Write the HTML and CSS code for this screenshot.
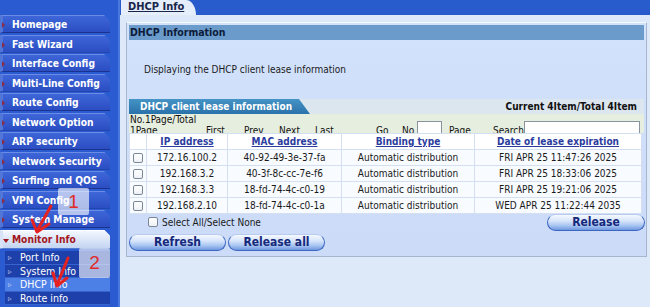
FILE: index.html
```html
<!DOCTYPE html>
<html lang="en">
<head>
  <meta charset="UTF-8">
  <title>DHCP Info</title>
  <link rel="stylesheet" href="styles.css">
</head>
<body>

<div class="page">
  <nav class="sidebar">
    <ul class="menu">
      <li>Homepage</li>
      <li>Fast Wizard</li>
      <li>Interface Config</li>
      <li>Multi-Line Config</li>
      <li>Route Config</li>
      <li>Network Option</li>
      <li>ARP security</li>
      <li>Network Security</li>
      <li>Surfing and QOS</li>
      <li>VPN Config</li>
      <li>System Manage</li>
      <li class="open">Monitor Info</li>
    </ul>
    <ul class="submenu">
      <li>Port Info</li>
      <li>System Info</li>
      <li class="on">DHCP Info</li>
      <li>Route info</li>
    </ul>
  </nav>

  <main class="main">
    <div class="tabbar"><span class="tab">DHCP Info</span></div>

    <section class="panel">
      <h3 class="panel-head">DHCP Information</h3>
      <p class="intro">Displaying the DHCP client lease information</p>

      <div class="subhead">
        <span class="subtab">DHCP client lease information</span>
        <span class="count">Current 4Item/Total 4Item</span>
      </div>

      <!-- pager row is cut off by the table, like on the device -->
      <div class="pager">
        <span class="pg-first">No.1Page/Total 1Page</span>
        <span class="pg w-first">First</span>
        <span class="pg w-prev">Prev</span>
        <span class="pg w-next">Next</span>
        <span class="pg w-last">Last</span>
        <span class="pg w-go">Go</span>
        <span class="pg w-no">No</span>
        <span class="pg-input w-page"><input type="text" class="page-no"></span>
        <span class="pg w-pg">Page</span>
        <span class="pg w-search">Search</span>
        <span class="pg-input"><input type="text" class="search"></span>
      </div>

      <table class="leases">
        <thead>
          <tr>
            <th class="c-chk"></th>
            <th class="c-ip">IP address</th>
            <th class="c-mac">MAC address</th>
            <th class="c-type">Binding type</th>
            <th>Date of lease expiration</th>
          </tr>
        </thead>
        <tbody>
          <tr>
            <td><input type="checkbox" class="chk"></td>
            <td>172.16.100.2</td>
            <td>40-92-49-3e-37-fa</td>
            <td>Automatic distribution</td>
            <td>FRI APR 25 11:47:26 2025</td>
          </tr>
          <tr>
            <td><input type="checkbox" class="chk"></td>
            <td>192.168.3.2</td>
            <td>40-3f-8c-cc-7e-f6</td>
            <td>Automatic distribution</td>
            <td>FRI APR 25 18:33:06 2025</td>
          </tr>
          <tr>
            <td><input type="checkbox" class="chk"></td>
            <td>192.168.3.3</td>
            <td>18-fd-74-4c-c0-19</td>
            <td>Automatic distribution</td>
            <td>FRI APR 25 19:21:06 2025</td>
          </tr>
          <tr>
            <td><input type="checkbox" class="chk"></td>
            <td>192.168.2.10</td>
            <td>18-fd-74-4c-c0-1a</td>
            <td>Automatic distribution</td>
            <td>WED APR 25 11:22:44 2035</td>
          </tr>
        </tbody>
      </table>

      <div class="select-row">
        <label class="select-all"><input type="checkbox" class="chk"> Select All/Select None</label>
        <button class="btn btn-release">Release</button>
      </div>

      <div class="btn-row">
        <button class="btn">Refresh</button>
        <button class="btn">Release all</button>
      </div>
    </section>
  </main>

  <!-- screenshot annotations -->
  <div class="mark mark-1">1</div>
  <div class="mark mark-2">2</div>
  <svg class="arrows" width="120" height="307" viewBox="0 0 120 307">
    <path d="M51 206 L37 231" />
    <path d="M32 220 L37 232 L49 224" />
    <path d="M68 258 L57 285" />
    <path d="M53 273 L57 286 L67 278" />
  </svg>
</div>

</body>
</html>
```

FILE: styles.css
```css
* {
  box-sizing: border-box;
}
body {
  margin: 0;
  width: 650px;
  height: 307px;
  overflow: hidden;
  font-family: "DejaVu Sans Condensed", "DejaVu Sans", sans-serif;
  font-size: 10px;
  color: #111;
}
.page {
  position: relative;
  display: flex;
  height: 307px;
}

/* left menu */
.sidebar {
  width: 120px;
  flex: none;
  background: #2b5bd0;
  border-right: 2px solid #4a78dc;
  padding-top: 15px;
}
.menu, .submenu {
  list-style: none;
  margin: 0;
  padding: 0;
}
.menu li {
  position: relative;
  width: 110px;
  height: 18px;
  margin-bottom: 1.5px;
  padding-left: 9px;
  line-height: 17px;
  font-size: 10.2px;
  font-weight: bold;
  color: #fff;
  background: linear-gradient(#3e66d8, #2b4ec2);
  border-top: 1px solid #6a8ce4;
  border-bottom: 1px solid #1b338f;
  border-left: 3px solid #5275d8;
  clip-path: polygon(0 0, 104px 0, 110px 6px, 110px 100%, 0 100%);
  white-space: nowrap;
}
.menu li::before {
  content: "";
  position: absolute;
  left: -1px;
  top: 6px;
  border-left: 3px solid #8a2c44;
  border-top: 3px solid transparent;
  border-bottom: 3px solid transparent;
}
.menu li.open {
  height: 19px;
  line-height: 18px;
  color: #a3161c;
  background: linear-gradient(#f3f7fe, #c4d5f2);
  border-top-color: #ffffff;
  border-bottom-color: #7f97cc;
  border-left-color: #d8e3f8;
}
.menu li.open::before {
  left: 0;
  top: 8px;
  border-left: 3px solid transparent;
  border-right: 3px solid transparent;
  border-top: 4px solid #a3161c;
  border-bottom: 0;
}
.submenu {
  margin-top: 2.5px;
}
.submenu li {
  position: relative;
  margin-left: 5px;
  width: 105px;
  height: 13.5px;
  padding-left: 15px;
  line-height: 13px;
  font-size: 10.5px;
  color: #fff;
  background: #1e40aa;
  border-bottom: 1px solid #3862cc;
}
.submenu li::before {
  content: "▹";
  position: absolute;
  left: 3px;
  top: 0;
  font-size: 8px;
  color: #c8d6f6;
}
.submenu li.on {
  background: #4d80e6;
}

/* right side */
.main {
  flex: 1;
  background: #dde8f8;
}
.tabbar {
  height: 15px;
  background: #285ccc;
  padding-left: 1px;
}
.tab {
  display: inline-block;
  width: 75px;
  height: 15px;
  padding-left: 7px;
  line-height: 14px;
  font-size: 11px;
  font-weight: bold;
  color: #18254a;
  text-decoration: underline;
  background: #e6eefb;
  border-top-right-radius: 10px 15px;
}

.panel {
  margin: 7px 3px 0 6px;
  padding: 2px 2px 5px;
  border: 1px solid #a6b6cf;
  border-top-color: #f4f8ff;
  background: linear-gradient(#d3e2fb, #cbdbf8);
}
.panel-head {
  margin: 0;
  height: 15px;
  padding-left: 1px;
  line-height: 15px;
  font-size: 10.5px;
  font-weight: bold;
  color: #0d1c3a;
  background: #6a9bcb;
}
.intro {
  margin: 24px 0 0;
  padding-left: 15px;
  line-height: 12px;
  font-size: 10px;
  color: #1a1a1a;
}

.subhead {
  display: flex;
  justify-content: space-between;
  align-items: center;
  margin-top: 23px;
  height: 15px;
  background: #dce6ee;
}
.subtab {
  width: 181px;
  height: 15px;
  padding-left: 11px;
  line-height: 15px;
  font-weight: bold;
  color: #fff;
  background: linear-gradient(#4594c6, #2a72aa);
  clip-path: polygon(0 0, 170px 0, 181px 100%, 0 100%);
}
.count {
  padding-right: 7px;
  font-weight: bold;
  color: #111;
}

.pager {
  display: flex;
  height: 19px;
  overflow: hidden;
  line-height: 11px;
  background: #e6eedf;
}
.pg-first {
  width: 77px;
  padding-left: 1px;
}
.pg {
  padding-top: 11px;
}
.pg-input {
  padding-top: 7px;
}
.w-first { width: 38px; }
.w-prev { width: 35px; }
.w-next { width: 36px; }
.w-last { width: 61px; }
.w-go { width: 26px; }
.w-no { width: 15px; }
.w-page { width: 32px; }
.w-pg { width: 44px; }
.w-search { width: 31px; }
.pager input {
  display: block;
  height: 16px;
  border: 1px solid #8a93a0;
  background: #fff;
  padding: 0;
}
.page-no { width: 25px; }
.search { width: 116px; }

.leases {
  width: 513px;
  border-collapse: collapse;
  background: #f8fbff;
}
.leases th, .leases td {
  height: 16px;
  padding: 0;
  text-align: center;
  border: 1px solid #d4e0f2;
  white-space: nowrap;
}
.leases th {
  background: #fff;
  font-weight: bold;
  color: #2b3c9e;
  text-decoration: underline;
}
.leases td {
  color: #1a1a1a;
}
.c-chk { width: 17px; }
.c-ip { width: 81px; }
.c-mac { width: 114px; }
.c-type { width: 133px; }

.chk {
  appearance: none;
  display: block;
  width: 10px;
  height: 10px;
  margin: 0 auto;
  border: 1px solid #7a8596;
  border-radius: 2px;
  background: linear-gradient(#fff, #eef1f5);
}

.select-row {
  display: flex;
  justify-content: space-between;
  align-items: center;
  height: 16px;
}
.select-all {
  display: flex;
  align-items: center;
  gap: 4px;
  padding-left: 19px;
  color: #1a1a1a;
}
.select-all .chk {
  margin: 0;
}

.btn-row {
  display: flex;
  gap: 2px;
  margin-top: 4px;
}
.btn {
  width: 97px;
  height: 17px;
  padding: 0;
  font-family: "DejaVu Sans Condensed", "DejaVu Sans", sans-serif;
  font-size: 12px;
  font-weight: bold;
  line-height: 15px;
  color: #15287a;
  border: 1px solid #3d66c0;
  border-top-color: #b8cbef;
  border-radius: 9px;
  background: linear-gradient(#f6f9ff 0%, #d6e4fb 40%, #a9c5f1 70%, #6f98e0 100%);
}
.btn-release {
  width: 98px;
  margin-right: -1px;
}

/* annotation overlay */
.mark {
  position: absolute;
  display: flex;
  align-items: center;
  justify-content: center;
  font-family: "Liberation Sans", sans-serif;
  font-size: 19px;
  color: #e12a2a;
  background: rgba(255, 255, 255, 0.62);
  border-radius: 2px;
}
.mark-1 {
  left: 58px;
  top: 188px;
  width: 31px;
  height: 27px;
}
.mark-2 {
  left: 79px;
  top: 248px;
  width: 31px;
  height: 30px;
}
.arrows {
  position: absolute;
  left: 0;
  top: 0;
}
.arrows path {
  fill: none;
  stroke: #e52222;
  stroke-width: 3;
  stroke-linecap: round;
  stroke-linejoin: round;
}
```
